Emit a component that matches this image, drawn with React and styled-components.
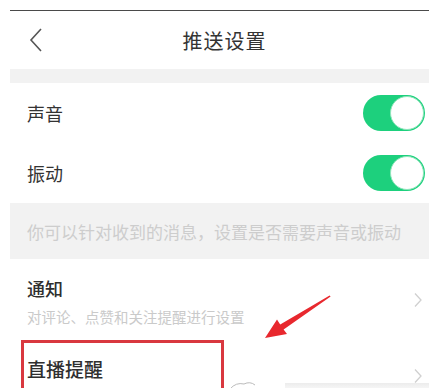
import React from "react";
import styled, { createGlobalStyle } from "styled-components";

const Global = createGlobalStyle`
  html, body { margin: 0; padding: 0; background: #fff; overflow: hidden; }
  body { font-family: "Noto Sans CJK SC", "Noto Sans", sans-serif; }
`;

const Screen = styled.div`
  position: relative;
  width: 429px;
  height: 388px;
  overflow: hidden;
  background: #fff;
  padding-top: 10px;
  box-sizing: border-box;
`;

const Page = styled.div`
  margin-left: 10px;
  width: 419px;
  border-top: 1.5px solid #4a4a4a;
`;

const Header = styled.div`
  display: grid;
  grid-template-columns: 1fr auto 1fr;
  align-items: center;
  height: 58px;
`;

const Back = styled.div`
  padding-left: 18px;
  display: flex;
  align-items: center;
`;

const Title = styled.div`
  font-size: 20px;
  color: #333;
  letter-spacing: 1px;
  margin-left: 10px;
`;

const Gap = styled.div`
  background: #f2f2f2;
  height: ${(p) => p.h}px;
`;

const Row = styled.div`
  display: flex;
  align-items: center;
  justify-content: space-between;
  height: 60px;
  padding: 0 4px 0 17px;
`;

const Label = styled.div`
  font-size: 18px;
  color: #333;
`;

const Switch = styled.div`
  position: relative;
  width: 62px;
  height: 36px;
  border-radius: 18px;
  background: #1dd07d;
`;

const Knob = styled.div`
  position: absolute;
  right: 1px;
  top: 1px;
  width: 32px;
  height: 32px;
  border-radius: 50%;
  background: #fff;
  border: 1px solid #8fe5bb;
`;

const Hint = styled.div`
  height: 56px;
  background: #f2f2f2;
  display: flex;
  align-items: center;
  padding-left: 17px;
  font-size: 17px;
  color: #cdcdcd;
  white-space: nowrap;
`;

const NavItem = styled.div`
  display: flex;
  align-items: center;
  justify-content: space-between;
  padding: 0 6px 0 17px;
  height: ${(p) => p.h}px;
`;

const NavText = styled.div`
  display: flex;
  flex-direction: column;
  gap: 6px;
  padding-top: ${(p) => p.pt || 0}px;
`;

const NavTitle = styled.div`
  font-size: ${(p) => p.size || 18}px;
  color: #2f2f2f;
  font-weight: 500;
  line-height: 26px;
`;

const NavSub = styled.div`
  font-size: 14.5px;
  color: #cacaca;
  line-height: 20px;
`;

const Chevron = styled.svg`
  flex-shrink: 0;
  margin-top: ${(p) => p.mt || 0}px;
`;

const RedBox = styled.div`
  position: absolute;
  left: 21px;
  top: 340px;
  width: 197px;
  height: 80px;
  border: 3px solid #d9383f;
  border-bottom: none;
`;

const Arrow = styled.svg`
  position: absolute;
  left: 260px;
  top: 290px;
`;

const Shade = styled.div`
  position: absolute;
  left: 285px;
  top: 383px;
  right: 0;
  height: 6px;
  background: linear-gradient(#ececec, #f7f7f7);
`;

const Blob = styled.svg`
  position: absolute;
  left: 228px;
  top: 380px;
`;

const RightChev = ({ mt }) => (
  <Chevron width="10" height="16" viewBox="0 0 10 16" mt={mt}>
    <path d="M2 1.5 L8 8 L2 14.5" fill="none" stroke="#d0d0d0" strokeWidth="1.3" />
  </Chevron>
);

export default function App() {
  return (
    <>
      <Global />
      <Screen>
        <Page>
          <Header>
            <Back>
              <svg width="16" height="26" viewBox="0 0 16 26">
                <path d="M13 2 L3 13 L13 24" fill="none" stroke="#555" strokeWidth="1.6" />
              </svg>
            </Back>
            <Title>推送设置</Title>
            <div />
          </Header>
          <Gap h={14} />
          <Row>
            <Label>声音</Label>
            <Switch>
              <Knob />
            </Switch>
          </Row>
          <Row>
            <Label>振动</Label>
            <Switch>
              <Knob />
            </Switch>
          </Row>
          <Hint>你可以针对收到的消息，设置是否需要声音或振动</Hint>
          <NavItem h={80}>
            <NavText pt={4}>
              <NavTitle>通知</NavTitle>
              <NavSub>对评论、点赞和关注提醒进行设置</NavSub>
            </NavText>
            <RightChev mt={2} />
          </NavItem>
          <NavItem h={60}>
            <NavText pt={0}>
              <NavTitle size={19}>直播提醒</NavTitle>
            </NavText>
            <RightChev mt={14} />
          </NavItem>
        </Page>
        <Shade />
        <Blob width="30" height="10" viewBox="0 0 30 10">
          <path d="M2 9 Q8 2 16 4 Q22 1 27 5" fill="none" stroke="#bbb" strokeWidth="1" />
        </Blob>
        <RedBox />
        <Arrow width="76" height="54" viewBox="0 0 76 54">
          <polygon
            points="5,48 27,44 23.6,39.4 70.6,6.6 69.6,5.4 20.2,34.4 17,29.6"
            fill="#e8282e"
          />
        </Arrow>
      </Screen>
    </>
  );
}
